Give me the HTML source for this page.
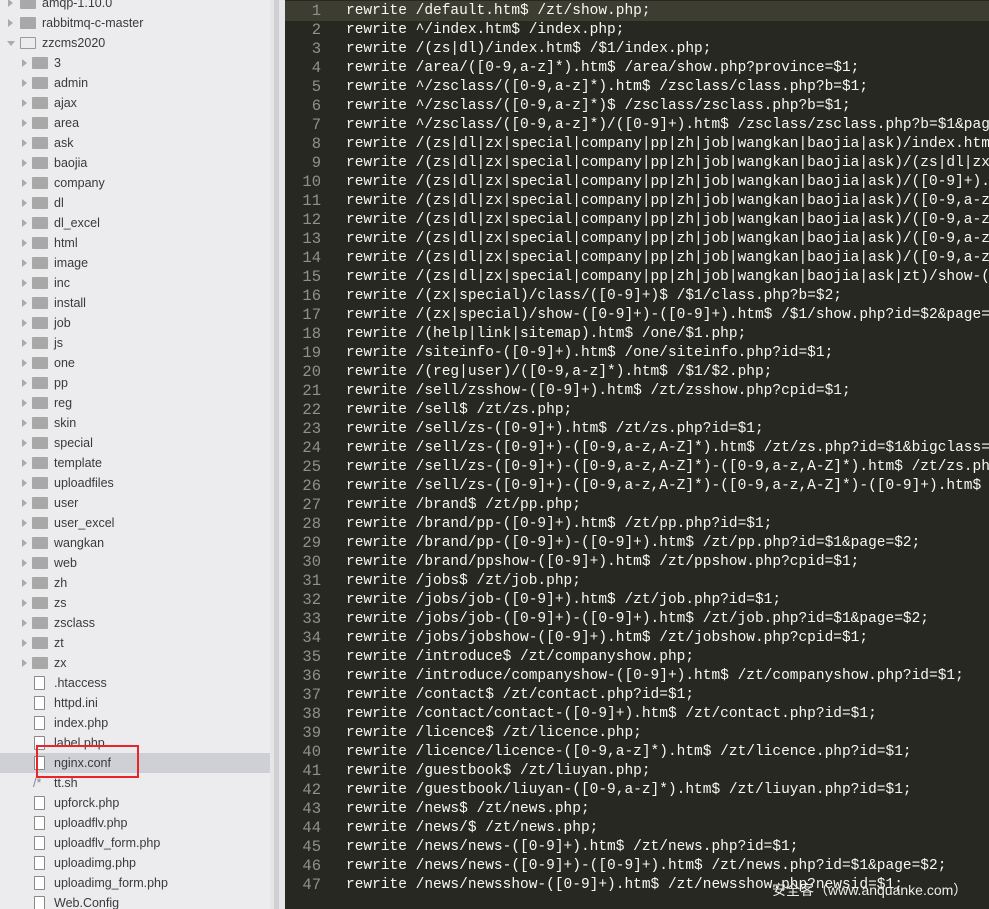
<!DOCTYPE html><html><head><meta charset="utf-8"><style>
body{margin:0;width:989px;height:909px;overflow:hidden;background:#272822;position:relative;font-family:"Liberation Sans",sans-serif}
#side{position:absolute;left:0;top:0;width:270px;height:909px;background:#ececef;overflow:hidden}
#sb{position:absolute;left:270px;top:0;width:15px;height:909px;background:#e6e6e8}
#thumb{position:absolute;left:274px;top:0;width:5px;height:909px;background:#d0d0d2}
.r{position:absolute;left:0;width:270px;height:20px;font-size:12.5px;color:#3a3a3a;line-height:20px}
.r .a{position:absolute;top:6px;width:0;height:0;border-top:4px solid transparent;border-bottom:4px solid transparent;border-left:5px solid #aaa}
.r .a.o{border-left:4px solid transparent;border-right:4px solid transparent;border-top:5px solid #aaa;border-bottom:0;top:8px}
.r .f{position:absolute;top:4px;width:16px;height:12px;background:#a8a8a8;border-radius:1px}
.r .fi{position:absolute;top:3px;width:9px;height:12px;border:1px solid #888;background:#fff;border-radius:1px}
.r .t{position:absolute}
#ed{position:absolute;left:285px;top:0;width:704px;height:909px;overflow:hidden;font-family:"Liberation Mono",monospace;font-size:14.5px;color:#f8f8f2}
.l{position:absolute;left:0;height:19px;line-height:19px;white-space:pre;width:704px}
.l .n{position:absolute;left:0;width:36px;text-align:right;color:#90918b;font-size:15.5px}
.l .c{position:absolute;left:61px}
#hl{position:absolute;left:0;top:1px;width:704px;height:20px;background:#3e3d32}
#red{position:absolute;left:36px;top:745px;width:99px;height:29px;border:2.5px solid #e8262a}
#wm{position:absolute;left:772px;top:880px;font-size:14px;color:#eee;font-family:"Liberation Sans","Noto Sans CJK SC",sans-serif;white-space:nowrap}
</style></head><body>
<div id="side">
<div class="r" style="top:-7px"><span class="a" style="left:8px"></span><span class="f" style="left:20px"></span><span class="t" style="left:42px">amqp-1.10.0</span></div>
<div class="r" style="top:13px"><span class="a" style="left:8px"></span><span class="f" style="left:20px"></span><span class="t" style="left:42px">rabbitmq-c-master</span></div>
<div class="r" style="top:33px"><span class="a o" style="left:7px"></span><span class="f" style="left:20px;background:none;border:1px solid #999;width:14px;height:10px"></span><span class="t" style="left:42px">zzcms2020</span></div>
<div class="r" style="top:53px"><span class="a" style="left:22px"></span><span class="f" style="left:32px"></span><span class="t" style="left:54px">3</span></div>
<div class="r" style="top:73px"><span class="a" style="left:22px"></span><span class="f" style="left:32px"></span><span class="t" style="left:54px">admin</span></div>
<div class="r" style="top:93px"><span class="a" style="left:22px"></span><span class="f" style="left:32px"></span><span class="t" style="left:54px">ajax</span></div>
<div class="r" style="top:113px"><span class="a" style="left:22px"></span><span class="f" style="left:32px"></span><span class="t" style="left:54px">area</span></div>
<div class="r" style="top:133px"><span class="a" style="left:22px"></span><span class="f" style="left:32px"></span><span class="t" style="left:54px">ask</span></div>
<div class="r" style="top:153px"><span class="a" style="left:22px"></span><span class="f" style="left:32px"></span><span class="t" style="left:54px">baojia</span></div>
<div class="r" style="top:173px"><span class="a" style="left:22px"></span><span class="f" style="left:32px"></span><span class="t" style="left:54px">company</span></div>
<div class="r" style="top:193px"><span class="a" style="left:22px"></span><span class="f" style="left:32px"></span><span class="t" style="left:54px">dl</span></div>
<div class="r" style="top:213px"><span class="a" style="left:22px"></span><span class="f" style="left:32px"></span><span class="t" style="left:54px">dl_excel</span></div>
<div class="r" style="top:233px"><span class="a" style="left:22px"></span><span class="f" style="left:32px"></span><span class="t" style="left:54px">html</span></div>
<div class="r" style="top:253px"><span class="a" style="left:22px"></span><span class="f" style="left:32px"></span><span class="t" style="left:54px">image</span></div>
<div class="r" style="top:273px"><span class="a" style="left:22px"></span><span class="f" style="left:32px"></span><span class="t" style="left:54px">inc</span></div>
<div class="r" style="top:293px"><span class="a" style="left:22px"></span><span class="f" style="left:32px"></span><span class="t" style="left:54px">install</span></div>
<div class="r" style="top:313px"><span class="a" style="left:22px"></span><span class="f" style="left:32px"></span><span class="t" style="left:54px">job</span></div>
<div class="r" style="top:333px"><span class="a" style="left:22px"></span><span class="f" style="left:32px"></span><span class="t" style="left:54px">js</span></div>
<div class="r" style="top:353px"><span class="a" style="left:22px"></span><span class="f" style="left:32px"></span><span class="t" style="left:54px">one</span></div>
<div class="r" style="top:373px"><span class="a" style="left:22px"></span><span class="f" style="left:32px"></span><span class="t" style="left:54px">pp</span></div>
<div class="r" style="top:393px"><span class="a" style="left:22px"></span><span class="f" style="left:32px"></span><span class="t" style="left:54px">reg</span></div>
<div class="r" style="top:413px"><span class="a" style="left:22px"></span><span class="f" style="left:32px"></span><span class="t" style="left:54px">skin</span></div>
<div class="r" style="top:433px"><span class="a" style="left:22px"></span><span class="f" style="left:32px"></span><span class="t" style="left:54px">special</span></div>
<div class="r" style="top:453px"><span class="a" style="left:22px"></span><span class="f" style="left:32px"></span><span class="t" style="left:54px">template</span></div>
<div class="r" style="top:473px"><span class="a" style="left:22px"></span><span class="f" style="left:32px"></span><span class="t" style="left:54px">uploadfiles</span></div>
<div class="r" style="top:493px"><span class="a" style="left:22px"></span><span class="f" style="left:32px"></span><span class="t" style="left:54px">user</span></div>
<div class="r" style="top:513px"><span class="a" style="left:22px"></span><span class="f" style="left:32px"></span><span class="t" style="left:54px">user_excel</span></div>
<div class="r" style="top:533px"><span class="a" style="left:22px"></span><span class="f" style="left:32px"></span><span class="t" style="left:54px">wangkan</span></div>
<div class="r" style="top:553px"><span class="a" style="left:22px"></span><span class="f" style="left:32px"></span><span class="t" style="left:54px">web</span></div>
<div class="r" style="top:573px"><span class="a" style="left:22px"></span><span class="f" style="left:32px"></span><span class="t" style="left:54px">zh</span></div>
<div class="r" style="top:593px"><span class="a" style="left:22px"></span><span class="f" style="left:32px"></span><span class="t" style="left:54px">zs</span></div>
<div class="r" style="top:613px"><span class="a" style="left:22px"></span><span class="f" style="left:32px"></span><span class="t" style="left:54px">zsclass</span></div>
<div class="r" style="top:633px"><span class="a" style="left:22px"></span><span class="f" style="left:32px"></span><span class="t" style="left:54px">zt</span></div>
<div class="r" style="top:653px"><span class="a" style="left:22px"></span><span class="f" style="left:32px"></span><span class="t" style="left:54px">zx</span></div>
<div class="r" style="top:673px"><span class="fi" style="left:34px"></span><span class="t" style="left:54px">.htaccess</span></div>
<div class="r" style="top:693px"><span class="fi" style="left:34px"></span><span class="t" style="left:54px">httpd.ini</span></div>
<div class="r" style="top:713px"><span class="fi" style="left:34px"></span><span class="t" style="left:54px">index.php</span></div>
<div class="r" style="top:733px"><span class="fi" style="left:34px"></span><span class="t" style="left:54px">label.php</span></div>
<div class="r" style="top:753px;background:#cfd0d6"><span class="fi" style="left:34px"></span><span class="t" style="left:54px">nginx.conf</span></div>
<div class="r" style="top:773px"><span class="t" style="left:33px;color:#888">/*</span><span class="t" style="left:54px">tt.sh</span></div>
<div class="r" style="top:793px"><span class="fi" style="left:34px"></span><span class="t" style="left:54px">upforck.php</span></div>
<div class="r" style="top:813px"><span class="fi" style="left:34px"></span><span class="t" style="left:54px">uploadflv.php</span></div>
<div class="r" style="top:833px"><span class="fi" style="left:34px"></span><span class="t" style="left:54px">uploadflv_form.php</span></div>
<div class="r" style="top:853px"><span class="fi" style="left:34px"></span><span class="t" style="left:54px">uploadimg.php</span></div>
<div class="r" style="top:873px"><span class="fi" style="left:34px"></span><span class="t" style="left:54px">uploadimg_form.php</span></div>
<div class="r" style="top:893px"><span class="fi" style="left:34px"></span><span class="t" style="left:54px">Web.Config</span></div>
</div>
<div id="sb"></div><div id="thumb"></div>
<div id="red"></div>
<div id="ed"><div id="hl"></div>
<div class="l" style="top:2px"><span class="n">1</span><span class="c">rewrite /default.htm$ /zt/show.php;</span></div>
<div class="l" style="top:21px"><span class="n">2</span><span class="c">rewrite ^/index.htm$ /index.php;</span></div>
<div class="l" style="top:40px"><span class="n">3</span><span class="c">rewrite /(zs|dl)/index.htm$ /$1/index.php;</span></div>
<div class="l" style="top:59px"><span class="n">4</span><span class="c">rewrite /area/([0-9,a-z]*).htm$ /area/show.php?province=$1;</span></div>
<div class="l" style="top:78px"><span class="n">5</span><span class="c">rewrite ^/zsclass/([0-9,a-z]*).htm$ /zsclass/class.php?b=$1;</span></div>
<div class="l" style="top:97px"><span class="n">6</span><span class="c">rewrite ^/zsclass/([0-9,a-z]*)$ /zsclass/zsclass.php?b=$1;</span></div>
<div class="l" style="top:116px"><span class="n">7</span><span class="c">rewrite ^/zsclass/([0-9,a-z]*)/([0-9]+).htm$ /zsclass/zsclass.php?b=$1&amp;page=$2;</span></div>
<div class="l" style="top:135px"><span class="n">8</span><span class="c">rewrite /(zs|dl|zx|special|company|pp|zh|job|wangkan|baojia|ask)/index.htm$ /$1/index.php;</span></div>
<div class="l" style="top:154px"><span class="n">9</span><span class="c">rewrite /(zs|dl|zx|special|company|pp|zh|job|wangkan|baojia|ask)/(zs|dl|zx)/index.htm$;</span></div>
<div class="l" style="top:173px"><span class="n">10</span><span class="c">rewrite /(zs|dl|zx|special|company|pp|zh|job|wangkan|baojia|ask)/([0-9]+).htm$;</span></div>
<div class="l" style="top:192px"><span class="n">11</span><span class="c">rewrite /(zs|dl|zx|special|company|pp|zh|job|wangkan|baojia|ask)/([0-9,a-z]*);</span></div>
<div class="l" style="top:211px"><span class="n">12</span><span class="c">rewrite /(zs|dl|zx|special|company|pp|zh|job|wangkan|baojia|ask)/([0-9,a-z]*);</span></div>
<div class="l" style="top:230px"><span class="n">13</span><span class="c">rewrite /(zs|dl|zx|special|company|pp|zh|job|wangkan|baojia|ask)/([0-9,a-z]*);</span></div>
<div class="l" style="top:249px"><span class="n">14</span><span class="c">rewrite /(zs|dl|zx|special|company|pp|zh|job|wangkan|baojia|ask)/([0-9,a-z]*);</span></div>
<div class="l" style="top:268px"><span class="n">15</span><span class="c">rewrite /(zs|dl|zx|special|company|pp|zh|job|wangkan|baojia|ask|zt)/show-([0-9]+);</span></div>
<div class="l" style="top:287px"><span class="n">16</span><span class="c">rewrite /(zx|special)/class/([0-9]+)$ /$1/class.php?b=$2;</span></div>
<div class="l" style="top:306px"><span class="n">17</span><span class="c">rewrite /(zx|special)/show-([0-9]+)-([0-9]+).htm$ /$1/show.php?id=$2&amp;page=$3;</span></div>
<div class="l" style="top:325px"><span class="n">18</span><span class="c">rewrite /(help|link|sitemap).htm$ /one/$1.php;</span></div>
<div class="l" style="top:344px"><span class="n">19</span><span class="c">rewrite /siteinfo-([0-9]+).htm$ /one/siteinfo.php?id=$1;</span></div>
<div class="l" style="top:363px"><span class="n">20</span><span class="c">rewrite /(reg|user)/([0-9,a-z]*).htm$ /$1/$2.php;</span></div>
<div class="l" style="top:382px"><span class="n">21</span><span class="c">rewrite /sell/zsshow-([0-9]+).htm$ /zt/zsshow.php?cpid=$1;</span></div>
<div class="l" style="top:401px"><span class="n">22</span><span class="c">rewrite /sell$ /zt/zs.php;</span></div>
<div class="l" style="top:420px"><span class="n">23</span><span class="c">rewrite /sell/zs-([0-9]+).htm$ /zt/zs.php?id=$1;</span></div>
<div class="l" style="top:439px"><span class="n">24</span><span class="c">rewrite /sell/zs-([0-9]+)-([0-9,a-z,A-Z]*).htm$ /zt/zs.php?id=$1&amp;bigclass=$2;</span></div>
<div class="l" style="top:458px"><span class="n">25</span><span class="c">rewrite /sell/zs-([0-9]+)-([0-9,a-z,A-Z]*)-([0-9,a-z,A-Z]*).htm$ /zt/zs.php?id=$1;</span></div>
<div class="l" style="top:477px"><span class="n">26</span><span class="c">rewrite /sell/zs-([0-9]+)-([0-9,a-z,A-Z]*)-([0-9,a-z,A-Z]*)-([0-9]+).htm$ /zt;</span></div>
<div class="l" style="top:496px"><span class="n">27</span><span class="c">rewrite /brand$ /zt/pp.php;</span></div>
<div class="l" style="top:515px"><span class="n">28</span><span class="c">rewrite /brand/pp-([0-9]+).htm$ /zt/pp.php?id=$1;</span></div>
<div class="l" style="top:534px"><span class="n">29</span><span class="c">rewrite /brand/pp-([0-9]+)-([0-9]+).htm$ /zt/pp.php?id=$1&amp;page=$2;</span></div>
<div class="l" style="top:553px"><span class="n">30</span><span class="c">rewrite /brand/ppshow-([0-9]+).htm$ /zt/ppshow.php?cpid=$1;</span></div>
<div class="l" style="top:572px"><span class="n">31</span><span class="c">rewrite /jobs$ /zt/job.php;</span></div>
<div class="l" style="top:591px"><span class="n">32</span><span class="c">rewrite /jobs/job-([0-9]+).htm$ /zt/job.php?id=$1;</span></div>
<div class="l" style="top:610px"><span class="n">33</span><span class="c">rewrite /jobs/job-([0-9]+)-([0-9]+).htm$ /zt/job.php?id=$1&amp;page=$2;</span></div>
<div class="l" style="top:629px"><span class="n">34</span><span class="c">rewrite /jobs/jobshow-([0-9]+).htm$ /zt/jobshow.php?cpid=$1;</span></div>
<div class="l" style="top:648px"><span class="n">35</span><span class="c">rewrite /introduce$ /zt/companyshow.php;</span></div>
<div class="l" style="top:667px"><span class="n">36</span><span class="c">rewrite /introduce/companyshow-([0-9]+).htm$ /zt/companyshow.php?id=$1;</span></div>
<div class="l" style="top:686px"><span class="n">37</span><span class="c">rewrite /contact$ /zt/contact.php?id=$1;</span></div>
<div class="l" style="top:705px"><span class="n">38</span><span class="c">rewrite /contact/contact-([0-9]+).htm$ /zt/contact.php?id=$1;</span></div>
<div class="l" style="top:724px"><span class="n">39</span><span class="c">rewrite /licence$ /zt/licence.php;</span></div>
<div class="l" style="top:743px"><span class="n">40</span><span class="c">rewrite /licence/licence-([0-9,a-z]*).htm$ /zt/licence.php?id=$1;</span></div>
<div class="l" style="top:762px"><span class="n">41</span><span class="c">rewrite /guestbook$ /zt/liuyan.php;</span></div>
<div class="l" style="top:781px"><span class="n">42</span><span class="c">rewrite /guestbook/liuyan-([0-9,a-z]*).htm$ /zt/liuyan.php?id=$1;</span></div>
<div class="l" style="top:800px"><span class="n">43</span><span class="c">rewrite /news$ /zt/news.php;</span></div>
<div class="l" style="top:819px"><span class="n">44</span><span class="c">rewrite /news/$ /zt/news.php;</span></div>
<div class="l" style="top:838px"><span class="n">45</span><span class="c">rewrite /news/news-([0-9]+).htm$ /zt/news.php?id=$1;</span></div>
<div class="l" style="top:857px"><span class="n">46</span><span class="c">rewrite /news/news-([0-9]+)-([0-9]+).htm$ /zt/news.php?id=$1&amp;page=$2;</span></div>
<div class="l" style="top:876px"><span class="n">47</span><span class="c">rewrite /news/newsshow-([0-9]+).htm$ /zt/newsshow.php?newsid=$1;</span></div>
</div>
<div id="wm">安全客（www.anquanke.com）</div>
</body></html>
